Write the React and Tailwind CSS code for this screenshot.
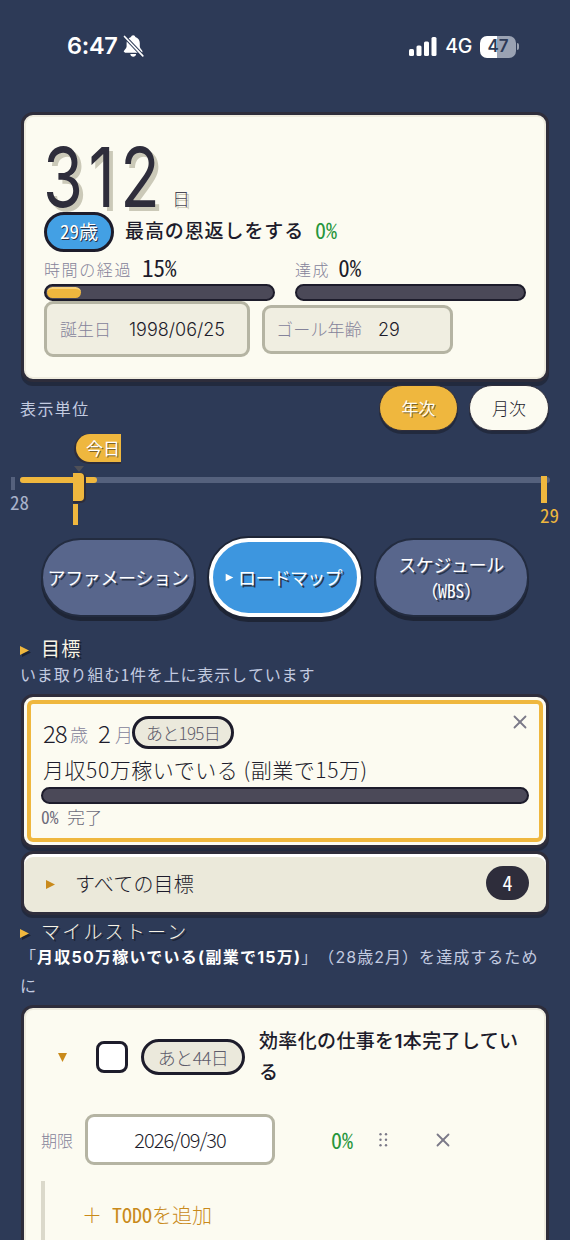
import { X } from "lucide-react";

const Meter = ({ className = "", value = 0 }) => (
  <div className={`h-[17px] rounded-full border-2 border-[#1d1c2b] bg-[#4b4958] p-px ${className}`}>
    {value > 0 && (
      <div
        className="h-full rounded-full border-t-2 border-[#f8d27a] bg-[#efb73e]"
        style={{ width: `${value}%` }}
      />
    )}
  </div>
);

const Heading = ({ children, className = "" }) => (
  <h2 className={`flex items-center text-[19px] text-[#f8f4e6] [text-shadow:2px_2px_0_#1b2233] ${className}`}>
    <span className="mr-[12px] mt-[5px] w-[9px] text-[#efb73e]">
      <Triangle className="drop-shadow-[2px_2px_0_#1b2233]" />
    </span>
    {children}
  </h2>
);

const Triangle = ({ className = "" }) => (
  <svg viewBox="0 0 9 9" className={`h-[9px] w-[9px] shrink-0 overflow-visible fill-current ${className}`}>
    <path d="M0 0 9 4.5 0 9Z" />
  </svg>
);

const Tab = ({ children, active }) => (
  <button
    className={`flex h-[79px] items-center justify-center whitespace-nowrap rounded-[40px] pb-[2px] text-center text-[18px] leading-[26px] text-white [text-shadow:2px_2px_0_#293449] ${
      active
        ? "w-[152px] border-4 border-white bg-[#3d96df] pr-[3px] tracking-[-0.7px] shadow-[0_0_0_2px_#1e2536,0_4px_0_1px_#1e2536]"
        : "w-[155px] border-2 border-[#232c40] bg-[#58668c] pr-px tracking-[-0.4px] shadow-[0_4px_0_#1e2536]"
    }`}
  >
    {children}
  </button>
);

const StatusBar = () => (
  <header className="flex h-[92px] items-center pl-[67px] pr-[51px] font-['Inter'] text-white">
    <span className="w-[56px] text-[23.5px] font-semibold tracking-[-0.3px]">6:47</span>
    <svg viewBox="0 0 22 24" className="h-[24px] w-[22px]">
      <path
        className="fill-white"
        d="M10.2 1.2c1.2 0 2 .8 2.2 1.9 2.7.9 4.4 3 4.4 6v3.4c0 2.1 2.7 3.4 2.7 5.1 0 .8-.5 1.2-1.4 1.2H2.2c-.9 0-1.4-.4-1.4-1.2 0-1.7 2.8-3 2.8-5.1V9.1c0-3 1.7-5.1 4.4-6 .2-1.1 1-1.9 2.2-1.9ZM7.3 20h5.8c-.2 1.7-1.4 2.8-2.9 2.8S7.5 21.7 7.3 20Z"
      />
      <path className="fill-none stroke-[#2d3a57]" strokeWidth="3.6" d="M1 2 20 22" />
      <path className="fill-none stroke-white" strokeWidth="1.7" strokeLinecap="round" d="M1.5 2.5 19.8 21.8" />
    </svg>
    <div className="ml-auto flex items-center">
      <svg viewBox="0 0 28 19" className="mr-[8px] h-[19px] w-[28px] fill-white">
        <rect x="0" y="12" width="5" height="7" rx="1.5" />
        <rect x="7.5" y="8.5" width="5" height="10.5" rx="1.5" />
        <rect x="15" y="4.5" width="5" height="14.5" rx="1.5" />
        <rect x="22.5" y="0" width="5" height="19" rx="1.5" />
      </svg>
      <span className="mr-[8px] mt-[2px] text-[19.5px] font-medium tracking-[-0.3px]">4G</span>
      <span className="mt-px flex h-[22px] w-[36px] items-center justify-center rounded-[7px] bg-linear-to-r from-white from-48% to-[#9aa2b3] to-48% text-[17px] font-semibold text-[#2d3a57]">
        47
      </span>
      <span className="ml-px h-[7px] w-[2px] rounded-r-full bg-[#9aa2b3]" />
    </div>
  </header>
);

const Summary = () => (
  <section className="mx-[21px] mt-[20px] h-[270px] rounded-[12px] border-[3px] border-[#2e2d3b] bg-[#fcfbf1] pl-[20px] shadow-[0_4px_0_#222a3e,inset_0_0_0_2px_#efecdf]">
    <div className="flex h-[97px]">
      <span className="ml-[-1px] w-[129px] origin-left scale-x-[0.78] font-['Inter'] text-[83px] font-normal leading-[125px] tracking-[7px] text-[#2e2d3b] [text-shadow:5px_4px_0_#cbc9b8]">
        312
      </span>
      <span className="mt-[70px] text-[18px] leading-[26px] text-[#4b4958] [text-shadow:2px_2px_0_#cbc9b8]">日</span>
    </div>
    <div className="flex h-[39px] items-center">
      <span className="flex h-[40px] w-[70px] items-center justify-center rounded-full border-[3px] border-[#1d1c2b] bg-[#43a0e4] font-['Noto_Sans_Mono_CJK_JP'] text-[19px] text-white [text-shadow:1px_1px_0_#293449]">
        29歳
      </span>
      <span className="ml-[11px] mt-[-2px] text-[19px] font-medium tracking-[0.9px] text-[#1d1c2b]">
        最高の恩返しをする
      </span>
      <span className="ml-[11px] mt-[-4px] font-['Noto_Sans_Mono_CJK_JP'] text-[22px] text-[#27963c]">0%</span>
    </div>
    <div className="flex h-[33px] gap-[20px] text-[16px] tracking-[1.6px] text-[#85839a]">
      <div className="flex w-[231px] items-center">
        <span className="mt-[2px]">時間の経過</span>
        <b className="ml-[10px] font-['Noto_Sans_Mono_CJK_JP'] text-[23px] font-normal tracking-normal text-[#1d1c2b]">
          15%
        </b>
      </div>
      <div className="flex items-center">
        <span className="mt-[2px]">達成</span>
        <b className="ml-[8px] font-['Noto_Sans_Mono_CJK_JP'] text-[23px] font-normal tracking-normal text-[#1d1c2b]">
          0%
        </b>
      </div>
    </div>
    <div className="flex gap-[20px]">
      <Meter className="w-[231px]" value={15} />
      <Meter className="w-[231px]" />
    </div>
    <div className="flex items-center gap-[12px] text-[17px] text-[#85839a]">
      <label className="flex h-[56px] w-[206px] items-center rounded-[9px] border-[3px] border-[#b5b4a3] bg-[#f0eee1] pl-[13px]">
        <span className="w-[69px]">誕生日</span>
        <span className="font-['Inter'] text-[18px] text-[#1d1c2b]">1998/06/25</span>
      </label>
      <label className="flex h-[49px] w-[191px] items-center rounded-[9px] border-[3px] border-[#b5b4a3] bg-[#f0eee1] pl-[11px]">
        <span className="w-[102px] tracking-[0.2px]">ゴール年齢</span>
        <span className="font-['Inter'] text-[18px] text-[#1d1c2b]">29</span>
      </label>
    </div>
  </section>
);

const UnitToggle = () => (
  <div className="mt-[3px] flex h-[45px] items-center pl-[20px] pr-[21px] text-[17px]">
    <span className="mr-auto text-[16px] font-normal tracking-[1.4px] text-[#c3cbe0]">表示単位</span>
    <button className="mr-[11px] h-[46px] w-[79px] rounded-full border border-[#2e2d3b] bg-[#efb73e] font-normal text-[#fffdf2] shadow-[0_3px_0_#222a3e] [text-shadow:1px_1px_0_#7d6327]">
      年次
    </button>
    <button className="h-[46px] w-[80px] rounded-full border border-[#2e2d3b] bg-[#fcfbf1] text-[#1d1c2b] shadow-[0_3px_0_#222a3e]">
      月次
    </button>
  </div>
);

// Pins are placed on the time axis by their own coordinates.
const Timeline = () => (
  <div className="relative h-[108px] text-[19px]">
    <div className="absolute left-[20px] top-[47px] h-[6px] w-[530px] rounded-full bg-[#55617d]" />
    <div className="absolute left-[20px] top-[47px] h-[6px] w-[77px] rounded-full bg-[#efb73e]" />
    <div className="absolute left-[11px] top-[47px] h-[13px] w-[4px] bg-[#55617d]" />
    <span className="absolute left-[10px] top-[60px] font-['Noto_Sans_Mono_CJK_JP'] leading-[24px] text-[#a9b2ca]">28</span>
    <span className="absolute left-[76px] top-[4px] h-[28px] w-[45px] rounded-l-full bg-[#efb73e] pl-[10px] text-[17px] font-normal leading-[28px] text-white shadow-[-1px_1px_0_1px_#2e2d3b] [text-shadow:1px_1px_0_#7d6327]">
      今日
    </span>
    <svg viewBox="0 0 10 6" className="absolute left-[74px] top-[36px] h-[6px] w-[10px] fill-[#4f5057]">
      <path d="M0 0H10L5 6Z" />
    </svg>
    <div className="absolute left-[73px] top-[43px] h-[28px] w-[11px] rounded-r-[4px] bg-[#efb73e] shadow-[1px_1px_0_1px_#2e2d3b]" />
    <div className="absolute left-[73px] top-[74px] h-[21px] w-[5px] bg-[#efb73e]" />
    <div className="absolute left-[541px] top-[46px] h-[27px] w-[6px] bg-[#efb73e]" />
    <span className="absolute left-[540px] top-[73px] font-['Noto_Sans_Mono_CJK_JP'] leading-[24px] text-[#efb73e]">29</span>
  </div>
);

const Tabs = () => (
  <nav className="flex gap-[13px] pl-[41px] font-['Noto_Sans_Mono_CJK_JP']">
    <Tab>アファメーション</Tab>
    <Tab active>
      <Triangle className="mr-[4px] mt-[2px] scale-[0.85]" />
      ロードマップ
    </Tab>
    <Tab>
      スケジュール
      <br />
      （WBS）
    </Tab>
  </nav>
);

const Goal = () => (
  <>
    <Heading className="ml-[20px] mt-[18px] h-[26px] font-normal tracking-[1.2px]">目標</Heading>
    <p className="ml-[20px] mt-px font-['Noto_Sans_Mono_CJK_JP'] text-[16px] leading-[25px] tracking-[0.85px] text-[#c3cbe0]">
      いま取り組む1件を上に表示しています
    </p>
    <section className="mx-[21px] mt-[7px] h-[154px] rounded-[12px] border-[3px] border-[#2e2d3b] bg-[#fcfbf1] p-[3px] shadow-[0_3px_0_#222a3e]">
      <div className="relative h-full rounded-[6px] border-4 border-[#efb73e] pl-[10px] pt-[12px]">
        <div className="flex h-[33px] items-center whitespace-nowrap pl-[2px]">
          <span className="w-[27px] text-[24px] tracking-[-1px] text-[#1d1c2b]">28</span>
          <span className="mt-[3px] w-[28px] text-[18px] text-[#85839a]">歳</span>
          <span className="w-[17px] text-[24px] text-[#1d1c2b]">2</span>
          <span className="mt-[3px] w-[17px] text-[18px] text-[#85839a]">月</span>
          <span className="flex h-[33px] w-[102px] items-center justify-center rounded-full border-[3px] border-[#1d1c2b] bg-[#ebe9dc] text-[17px] tracking-[-0.7px] text-[#5d5b6a]">
            あと195日
          </span>
        </div>
        <h3 className="flex h-[38px] items-center pl-[2px] pt-[4px] text-[21px] tracking-[0.55px] text-[#1d1c2b]">
          月収50万稼いでいる (副業で15万)
        </h3>
        <Meter className="w-[488px]" />
        <p className="font-['Noto_Sans_Mono_CJK_JP'] text-[17.5px] leading-[26px] text-[#6d6b7a]">
          0% <span className="font-['Noto_Sans_CJK_JP']">完了</span>
        </p>
        <X className="absolute right-[8px] top-[7px] h-[22px] w-[22px] text-[#7b7988]" strokeWidth={2} />
      </div>
    </section>
    <button className="mx-[21px] mt-[3px] flex h-[64px] w-[528px] items-center rounded-[12px] border-[3px] border-[#2e2d3b] bg-[#ebe9da] pl-[22px] pr-[17px] text-[20px] text-[#1d1c2b] shadow-[0_3px_0_#222a3e,inset_0_3px_0_#fff]">
      <Triangle className="mr-[20px] mt-[2px] text-[#c98a1b]" />
      <span className="mt-px tracking-[0.2px]">すべての目標</span>
      <span className="ml-auto flex h-[34px] w-[43px] items-center justify-center rounded-full bg-[#2e2d3b] font-['Noto_Sans_Mono_CJK_JP'] text-[20px] text-white">
        4
      </span>
    </button>
  </>
);

const Milestones = () => (
  <>
    <Heading className="ml-[20px] mt-[4px] h-[24px] tracking-[2.2px]">マイルストーン</Heading>
    <p className="ml-[20px] w-[545px] whitespace-nowrap font-['Inter','Noto_Sans_CJK_JP'] text-[16px] font-normal leading-[29px] tracking-[1.05px] text-[#c3cbe0] [text-spacing-trim:space-all]">
      「<b className="font-bold tracking-[1.25px] text-white">月収50万稼いでいる(副業で15万)</b>」（28歳2月）を達成するため
      <br />に
    </p>
    <section className="mx-[21px] mt-[4px] h-[260px] rounded-t-[12px] border-[3px] border-b-0 border-[#2e2d3b] bg-[#fcfbf1] pl-[17px] shadow-[inset_0_0_0_2px_#efecdf]">
      <div className="flex h-[98px] items-center">
        <Triangle className="ml-[17px] mr-[29px] rotate-90 text-[#c98a1b]" />
        <span className="h-[32px] w-[32px] rounded-[8px] border-[3px] border-[#1d1c2b] bg-white" />
        <span className="ml-[13px] flex h-[36px] w-[104px] items-center justify-center rounded-full border-[3px] border-[#1d1c2b] bg-[#ebe9dc] text-[18px] tracking-[-0.6px] text-[#5d5b6a]">
          あと44日
        </span>
        <h3 className="ml-[14px] w-[275px] whitespace-nowrap font-['Inter','Noto_Sans_CJK_JP'] text-[19px] font-medium leading-[31px] tracking-[0.35px] text-[#1d1c2b]">
          効率化の仕事を<span className="font-semibold">1</span>本完了してい
          <br />る
        </h3>
      </div>
      <div className="mt-[8px] flex h-[51px] items-center">
        <span className="w-[44px] text-[16px] text-[#85839a]">期限</span>
        <span className="flex h-[51px] w-[190px] items-center justify-center rounded-[9px] border-[3px] border-[#b5b4a3] bg-white text-[20px] tracking-[-1px] text-[#1d1c2b]">
          2026/09/30
        </span>
        <span className="ml-[56px] w-[48px] font-['Noto_Sans_Mono_CJK_JP'] text-[22px] text-[#27963c]">0%</span>
        <svg viewBox="0 0 9 14" className="h-[14px] w-[9px] fill-[#7b7988]">
          {[1.3, 6.8, 12.3].map((y) => (
            <g key={y}>
              <circle cx="1.5" cy={y} r="1.2" />
              <circle cx="7" cy={y} r="1.2" />
            </g>
          ))}
        </svg>
        <X className="ml-[44px] h-[22px] w-[22px] text-[#7b7988]" strokeWidth={2} />
      </div>
      <div className="mt-[16px] flex h-[80px] border-l-4 border-[#dbd9cb] pl-[37px] pt-[20px] text-[20px] leading-[28px] text-[#c98a1b]">
        <span className="w-[30px]">＋</span>
        <span>
          <span className="font-['Noto_Sans_Mono_CJK_JP']">TODO</span>を追加
        </span>
      </div>
    </section>
  </>
);

export default function App() {
  return (
    <div className="h-[1240px] w-[570px] overflow-hidden bg-[#2d3a57] font-['Noto_Sans_CJK_JP',sans-serif] font-light">
      <StatusBar />
      <Summary />
      <UnitToggle />
      <Timeline />
      <Tabs />
      <Goal />
      <Milestones />
    </div>
  );
}
